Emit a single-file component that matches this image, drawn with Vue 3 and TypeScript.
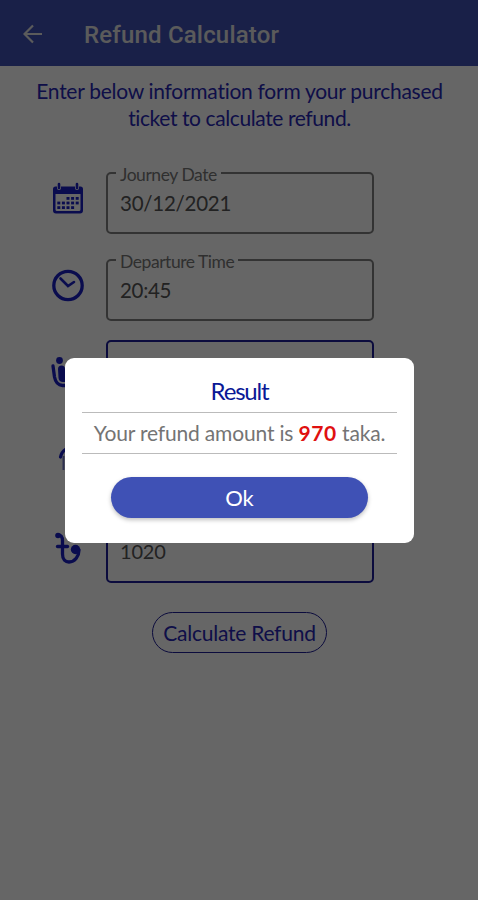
<script setup lang="ts">
import { ref } from 'vue'

interface Field {
  icon: 'date' | 'time' | 'seat' | 'ticket' | 'taka'
  label: string
  value: string
}

const fields: Field[] = [
  { icon: 'date', label: 'Journey Date', value: '30/12/2021' },
  { icon: 'time', label: 'Departure Time', value: '20:45' },
  { icon: 'seat', label: '', value: '' },
  { icon: 'ticket', label: '', value: '' },
  { icon: 'taka', label: '', value: '1020' },
]
const refund = ref(970)
const open = ref(true)

const dots: [number, number][] = []
for (let r = 0; r < 3; r++) {
  for (let c = 0; c < 5; c++) {
    if ((r === 0 && c < 2) || (r === 2 && c === 4)) continue
    dots.push([5.3 + c * 4.6, 15 + r * 4.6])
  }
}
</script>

<template>
  <div class="screen">
    <header class="bar">
      <svg class="back" viewBox="0 0 20 20"><path d="M19 10H2M10 1.5L1.5 10l8.500 8.500" /></svg>
      <h1>Refund Calculator</h1>
    </header>

    <main class="body">
      <p class="intro">Enter below information form your purchased<br><span class="second">ticket to calculate refund.</span></p>

      <div class="form">
        <div v-for="f in fields" :key="f.icon" class="row" :class="'row-' + f.icon">
          <svg class="icon" viewBox="0 0 32 32">
            <g v-if="f.icon === 'date'">
              <path class="fill" fill-rule="evenodd" d="M3.500 4.500H5V6a2 2 0 0 0 4 0V4.500h14V6a2 2 0 0 0 4 0V4.500h1.500Q31 4.500 31 7v21.500q0 3-3 3H4q-3 0-3-3V7Q1 4.500 3.500 4.500ZM3.500 12v15.500Q3.500 29 5 29h22q1.500 0 1.500-1.500V12Z" />
              <path class="thin" d="M7 2v4M25 2v4" />
              <rect v-for="(d, i) in dots" :key="i" class="fill" :x="d[0]" :y="d[1]" width="3" height="2.800" />
            </g>
            <g v-else-if="f.icon === 'time'">
              <circle cx="16" cy="16.500" r="14.200" class="line" />
              <path class="thin" d="M8.500 9.500L16 17l6-4" />
            </g>
            <g v-else-if="f.icon === 'seat'">
              <circle cx="7.500" cy="3.500" r="3.400" class="fill" />
              <path class="line" d="M1 9l1.500 11q1.500 8 8 8.500H25" />
              <path class="fill" d="M6 12q0-3.500 3.500-3.500T13 12l2 9h10v4H11q-4 0-4.500-4Z" />
            </g>
            <g v-else-if="f.icon === 'ticket'">
              <path class="line" d="M8.500 13q1-5 5.500-8" />
              <path class="faint" d="M11.500 12v14" />
            </g>
            <g v-else>
              <circle cx="6" cy="3.500" r="2.800" class="fill" />
              <path class="line" d="M6 2.800q4.500 0 4.500 6V22c0 5.500 3 8 6.500 8 6 0 10-6 10-12" />
              <path class="line" d="M5.500 14.500h10" />
              <circle cx="23.500" cy="17.500" r="4.700" class="fill" />
            </g>
          </svg>
          <fieldset class="field" :class="{ active: !f.label }">
            <legend v-if="f.label">{{ f.label }}</legend>
            <span class="value" :class="'v-' + f.icon">{{ f.value }}</span>
          </fieldset>
        </div>
      </div>

      <button class="calc" @click="open = true">Calculate Refund</button>
    </main>

    <div v-if="open" class="overlay">
      <section class="dialog">
        <h2>Result</h2>
        <p class="message">Your refund amount is <b>{{ refund }}</b> taka.</p>
        <button class="ok" @click="open = false">Ok</button>
      </section>
    </div>
  </div>
</template>

<style>
body { margin: 0; background: #666; }
</style>

<style scoped>
* { box-sizing: border-box; }
.screen {
  position: relative;
  width: 478px;
  height: 900px;
  overflow: hidden;
  background: #fff;
  font-family: Lato, "Liberation Sans", sans-serif;
  color: #2626b4;
}
.bar {
  display: flex;
  align-items: center;
  height: 66px;
  padding: 1px 0 0 23px;
  background: #3f51b5;
}
.back { width: 20px; height: 20px; fill: none; stroke: #e4e4e4; stroke-width: 2.2; }
.bar h1 {
  margin: 2px 0 0 41px;
  font: 500 24px/30px Roboto, sans-serif;
  letter-spacing: 0.18px;
  color: #e4e4e4;
}
.body { display: flex; flex-direction: column; align-items: center; }
.intro {
  margin: 11px 0 0 1px;
  font-size: 21px;
  line-height: 27px;
  letter-spacing: -0.27px;
  text-align: center;
  white-space: nowrap;
}
.second { letter-spacing: -0.4px; }
.form { align-self: flex-start; margin-top: 33px; padding-left: 52px; }
.row { display: flex; height: 87px; align-items: flex-start; }
.row-time { height: 88px; }
.row-taka { height: 75px; }
.icon { width: 32px; height: 32px; margin-top: 18px; overflow: visible; flex: none; }
.row-taka .icon { margin-top: 19px; }
.fill { fill: #1a20c4; }
.line { fill: none; stroke: #1a20c4; stroke-width: 3.3; stroke-linecap: round; }
.thin { fill: none; stroke: #1a20c4; stroke-width: 2.6; stroke-linecap: round; }
.faint { fill: none; stroke: #7479c8; stroke-width: 2; }
.field {
  width: 268px;
  height: 72px;
  min-width: 0;
  margin: -2px 0 0 22px;
  padding: 0 0 0 8px;
  border: 2px solid #818181;
  border-radius: 5px;
  color: #555;
}
.field legend {
  padding: 4px 4px 0;
  font-size: 17.500px;
  line-height: 18px;
  letter-spacing: -0.45px;
  color: #777;
}
.field.active { height: 64px; margin-top: 6px; border-color: #1c1c98; padding-top: 9px; }
.row-seat .field.active { margin-top: 1px; }
.value { display: block; padding: 0 0 0 4px; font-size: 20.500px; line-height: 26px; margin-top: 6px; }
.active .value { margin-top: 8px; font-size: 20px; letter-spacing: -0.2px; }
.v-date { letter-spacing: -0.25px; }
.v-time { letter-spacing: -0.3px; }
.calc {
  width: 175px;
  height: 41px;
  margin: 24px 0 0 1px;
  padding: 0;
  border: 1.500px solid #1c1c98;
  border-radius: 21px;
  background: transparent;
  font: 21px/38px Lato, sans-serif;
  letter-spacing: -0.25px;
  color: #2626b4;
  white-space: nowrap;
}
.overlay {
  position: absolute;
  inset: 0;
  display: flex;
  justify-content: center;
  align-items: center;
  background: rgba(0, 0, 0, 0.6);
}
.dialog {
  display: flex;
  flex-direction: column;
  align-items: center;
  width: 349px;
  height: 185px;
  margin: 1px 0 0 1px;
  padding: 17px 17px 0 17px;
  border-radius: 9px;
  background: #fff;
}
.dialog h2 {
  margin: 0;
  height: 37px;
  font-size: 24px;
  line-height: 32px;
  font-weight: 400;
  letter-spacing: -1.2px;
  color: #0a1896;
}
.message {
  width: 100%;
  height: 42px;
  margin: 0;
  border: solid #bbb;
  border-width: 1.500px 0;
  font-size: 21px;
  line-height: 40px;
  letter-spacing: -0.17px;
  text-align: center;
  white-space: nowrap;
  color: #747474;
}
.message b { color: #e01010; letter-spacing: 0.6px; }
.ok {
  width: 257px;
  height: 41px;
  margin-top: 23px;
  padding: 0;
  border: 0;
  border-radius: 21px;
  background: #3f51b5;
  box-shadow: 0 2px 4px rgba(0, 0, 0, 0.25);
  font: 22px/40px Lato, sans-serif;
  color: #fff;
}
</style>
